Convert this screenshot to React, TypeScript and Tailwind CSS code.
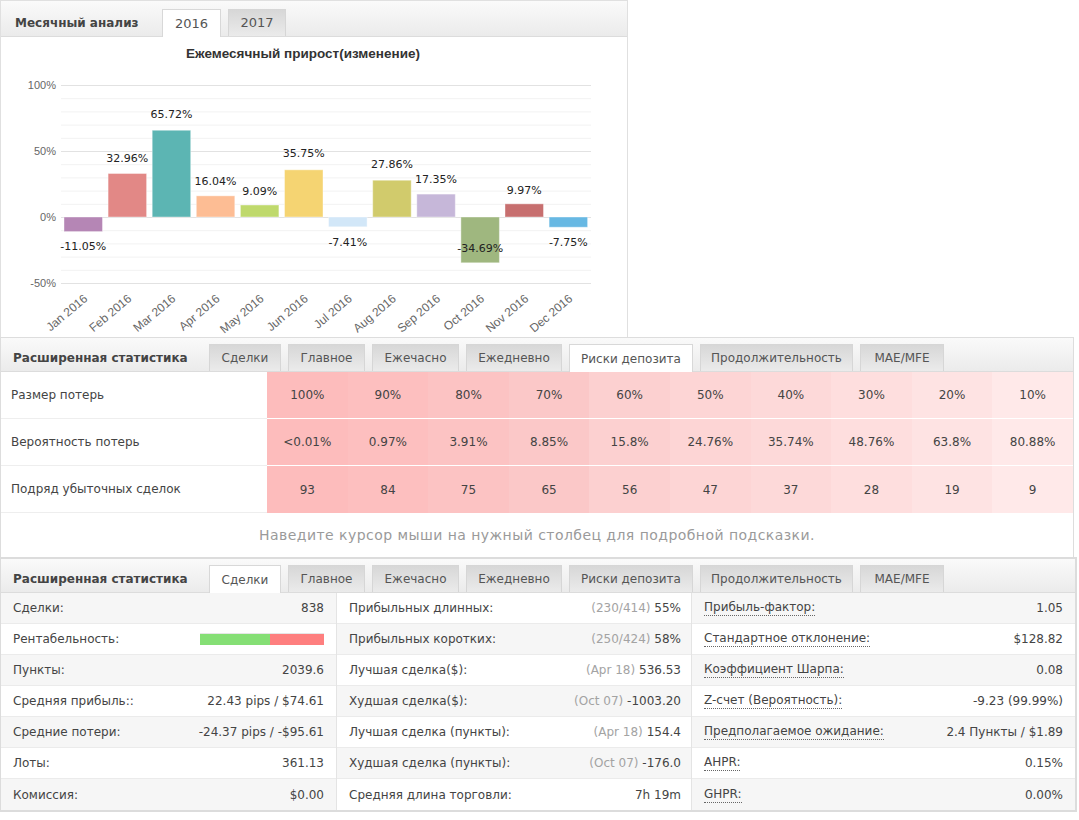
import React from 'react'

// monthly change, %; ly = label centre on the page (px)
const months = [
  { m: 'Jan', v: -11.05, c: '#b586b5', ly: 245 },
  { m: 'Feb', v: 32.96, c: '#e28886', ly: 157 },
  { m: 'Mar', v: 65.72, c: '#5cb5b3', ly: 113 },
  { m: 'Apr', v: 16.04, c: '#fdbd94', ly: 180 },
  { m: 'May', v: 9.09, c: '#bfd96c', ly: 190 },
  { m: 'Jun', v: 35.75, c: '#f5d472', ly: 152 },
  { m: 'Jul', v: -7.41, c: '#d2e7f8', ly: 241 },
  { m: 'Aug', v: 27.86, c: '#d1cb6c', ly: 163 },
  { m: 'Sep', v: 17.35, c: '#c6b7d9', ly: 178 },
  { m: 'Oct', v: -34.69, c: '#9fb77f', ly: 247 },
  { m: 'Nov', v: 9.97, c: '#c76f6f', ly: 189 },
  { m: 'Dec', v: -7.75, c: '#67b8e3', ly: 241 },
]

const tabs = ['Сделки', 'Главное', 'Ежечасно', 'Ежедневно', 'Риски депозита', 'Продолжительность', 'MAE/MFE']
const tabW = ['w-[72px]', 'w-[77px]', 'w-[87px]', 'w-[96px]', 'w-[124px]', 'w-[153px]', 'w-[84px]']

const riskCols = [
  { size: '100%', prob: '<0.01%', row: '93', bg: 'bg-[#fdbcbc]' },
  { size: '90%', prob: '0.97%', row: '84', bg: 'bg-[#fdbfbf]' },
  { size: '80%', prob: '3.91%', row: '75', bg: 'bg-[#fcc3c3]' },
  { size: '70%', prob: '8.85%', row: '65', bg: 'bg-[#fbc8c8]' },
  { size: '60%', prob: '15.8%', row: '56', bg: 'bg-[#fcd0d0]' },
  { size: '50%', prob: '24.76%', row: '47', bg: 'bg-[#fdd5d5]' },
  { size: '40%', prob: '35.74%', row: '37', bg: 'bg-[#fdd9d9]' },
  { size: '30%', prob: '48.76%', row: '28', bg: 'bg-[#fedede]' },
  { size: '20%', prob: '63.8%', row: '19', bg: 'bg-[#fee3e3]' },
  { size: '10%', prob: '80.88%', row: '9', bg: 'bg-[#ffe9e9]' },
]

const ZERO = 180
const K = 1.32

function MonthlyChart() {
  const grid = []
  for (let v = -50; v <= 100; v += 10) grid.push(v)
  return (
    <svg width="626" height="300" className="block">
      <text x="302" y="21" textAnchor="middle" fontFamily="Liberation Sans, Arial, sans-serif" fontWeight="bold" fontSize="13.5" fill="#333">
        Ежемесячный прирост(изменение)
      </text>
      {grid.map(v => (
        <line key={v} x1="60" x2="590" y1={ZERO - v * K + 0.5} y2={ZERO - v * K + 0.5} stroke={v % 50 === 0 ? '#e2e2e2' : '#f2f2f2'} strokeWidth="1" />
      ))}
      {[100, 50, 0, -50].map(v => (
        <text key={v} x="55" y={ZERO - v * K + 4} textAnchor="end" fontFamily="Liberation Sans, Arial, sans-serif" fontSize="11" fill="#666">
          {v}%
        </text>
      ))}
      {months.map((d, i) => {
        const x = 63 + i * 44.1
        const h = Math.abs(d.v) * K
        const y = d.v > 0 ? ZERO - h : ZERO
        const cx = x + 19.25
        return (
          <g key={d.m}>
            <rect x={x} y={y} width="38.5" height={h} fill={d.c} stroke="#ffffff" strokeOpacity="0.4" strokeWidth="1" />
            <text x={cx} y={d.ly - 36 + 4} textAnchor="middle" fontFamily="DejaVu Sans, Verdana, sans-serif" fontSize="11" fill="#222">
              {d.v.toFixed(2)}%
            </text>
            <text
              x={cx + 5}
              y="263"
              textAnchor="end"
              transform={`rotate(-40 ${cx + 5} 263)`}
              fontFamily="Liberation Sans, Arial, sans-serif"
              fontSize="12"
              fill="#666"
            >
              {d.m} 2016
            </text>
          </g>
        )
      })}
    </svg>
  )
}

function Tab({ label, active, w }: { label: string; active?: boolean; w: string }) {
  return (
    <div
      className={`${w} flex items-center justify-center border border-b-0 text-[#555] ${
        active ? 'h-[28px] -mb-px bg-white border-[#d8d8d8]' : 'h-[27px] bg-linear-to-b from-[#d7d7d7] to-[#ebebeb] border-[#d6d6d6]'
      }`}
    >
      {label}
    </div>
  )
}

function StatsHeader({ active }: { active: number }) {
  return (
    <div className="h-[34px] flex items-end bg-linear-to-b from-[#fafafa] to-[#ebebeb] border-b border-[#dcdcdc] pl-[12px]">
      <div className="w-[196px] h-[27px] flex items-center font-bold text-[#444]">Расширенная статистика</div>
      <div className="flex gap-[7px]">
        {tabs.map((t, i) => (
          <Tab key={t} label={t} w={tabW[i]} active={i === active} />
        ))}
      </div>
    </div>
  )
}

function RiskPanel() {
  const rows: { label: string; key: 'size' | 'prob' | 'row' }[] = [
    { label: 'Размер потерь', key: 'size' },
    { label: 'Вероятность потерь', key: 'prob' },
    { label: 'Подряд убыточных сделок', key: 'row' },
  ]
  return (
    <div className="w-[1074px] border-t border-r border-l border-[#dddddd] bg-white">
      <StatsHeader active={4} />
      {rows.map((r, ri) => (
        <div key={r.key} className="flex h-[47px]">
          <div className="w-[266px] pl-[10px] flex items-center text-[#444] border-b border-[#eeeeee]">
            {r.label}
          </div>
          {riskCols.map(c => (
            <div key={c.size} className={`flex-1 flex items-center justify-center text-[#444] ${c.bg} ${ri < 2 ? 'border-b border-white' : ''}`}>
              {c[r.key]}
            </div>
          ))}
        </div>
      ))}
      <div className="h-[44px] flex items-center justify-center text-[14px] tracking-[0.45px] text-[#9a9a9a]">
        Наведите курсор мыши на нужный столбец для подробной подсказки.
      </div>
    </div>
  )
}

type Cell = { label: string; value: string; note?: string }

const col1: Cell[] = [
  { label: 'Сделки:', value: '838' },
  { label: 'Рентабельность:', value: 'bar' },
  { label: 'Пункты:', value: '2039.6' },
  { label: 'Средняя прибыль::', value: '22.43 pips / $74.61' },
  { label: 'Средние потери:', value: '-24.37 pips / -$95.61' },
  { label: 'Лоты:', value: '361.13' },
  { label: 'Комиссия:', value: '$0.00' },
]

const col2: Cell[] = [
  { label: 'Прибыльных длинных:', note: '(230/414)', value: '55%' },
  { label: 'Прибыльных коротких:', note: '(250/424)', value: '58%' },
  { label: 'Лучшая сделка($):', note: '(Apr 18)', value: '536.53' },
  { label: 'Худшая сделка($):', note: '(Oct 07)', value: '-1003.20' },
  { label: 'Лучшая сделка (пункты):', note: '(Apr 18)', value: '154.4' },
  { label: 'Худшая сделка (пункты):', note: '(Oct 07)', value: '-176.0' },
  { label: 'Средняя длина торговли:', value: '7h 19m' },
]

const col3: Cell[] = [
  { label: 'Прибыль-фактор:', value: '1.05' },
  { label: 'Стандартное отклонение:', value: '$128.82' },
  { label: 'Коэффициент Шарпа:', value: '0.08' },
  { label: 'Z-счет (Вероятность):', value: '-9.23 (99.99%)' },
  { label: 'Предполагаемое ожидание:', value: '2.4 Пункты / $1.89' },
  { label: 'AHPR:', value: '0.15%' },
  { label: 'GHPR:', value: '0.00%' },
]

function StatColumn({ cells, w, pr, oddGray, dotted, last }: { cells: Cell[]; w: string; pr: string; oddGray: boolean; dotted?: boolean; last?: boolean }) {
  return (
    <div className={`${w} flex flex-col ${last ? '' : 'border-r border-[#e4e4e4]'}`}>
      {cells.map((c, i) => {
        const gray = (i % 2 === 0) === oddGray
        return (
          <div key={c.label} className={`h-[31px] flex items-center justify-between pl-[12px] ${pr} text-[#444] ${gray ? 'bg-[#f6f6f6]' : 'bg-white'} ${i < cells.length - 1 ? 'border-b border-[#ebebeb]' : ''}`}>
            {dotted ? (
              <span className="border-b border-dotted border-[#666] leading-[15px]">{c.label}</span>
            ) : (
              <span>{c.label}</span>
            )}
            {c.value === 'bar' ? (
              <div className="w-[124px] h-[12px] flex border-t border-[#e6e6e6]">
                <div className="w-[70px] bg-[#85df75]" />
                <div className="flex-1 bg-[#fe7f7f]" />
              </div>
            ) : (
              <span>
                {c.note && <span className="text-[#a3a3a3]">{c.note} </span>}
                {c.value}
              </span>
            )}
          </div>
        )
      })}
    </div>
  )
}

function DealsPanel() {
  return (
    <div className="w-[1077px] border-t-2 border-l border-r-2 border-b-2 border-[#dcdcdc] bg-white">
      <StatsHeader active={0} />
      <div className="flex">
        <StatColumn cells={col1} w="w-[336px]" pr="pr-[12px]" oddGray />
        <StatColumn cells={col2} w="w-[355px]" pr="pr-[10px]" oddGray={false} />
        <StatColumn cells={col3} w="w-[383px]" pr="pr-[12px]" oddGray dotted last />
      </div>
    </div>
  )
}

export default function App() {
  return (
    <div className="w-[1079px] h-[820px] bg-white font-['DejaVu_Sans',Verdana,sans-serif] text-[12px] overflow-hidden">
      <div className="w-[628px] border-t border-l border-r border-[#e0e0e0]">
        <div className="h-[36px] flex items-end bg-linear-to-b from-[#fafafa] to-[#ebebeb] border-b border-[#dcdcdc] pl-[14px]">
          <div className="w-[147px] h-[27px] flex items-center font-bold text-[#444]">Месячный анализ</div>
          <div className="flex gap-[7px] text-[13px]">
            <Tab label="2016" w="w-[59px]" active />
            <Tab label="2017" w="w-[58px]" />
          </div>
        </div>
        <MonthlyChart />
      </div>
      <RiskPanel />
      <DealsPanel />
    </div>
  )
}
